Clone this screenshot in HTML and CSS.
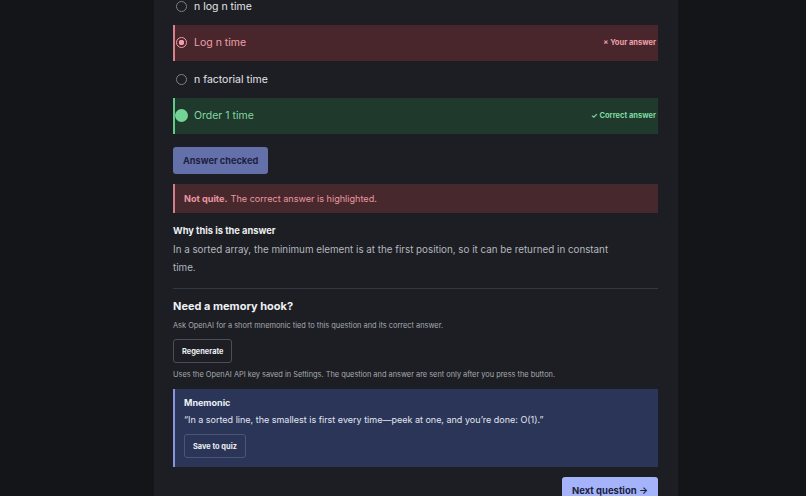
FILE: index.html
```html
<!DOCTYPE html>
<html lang="en">
<head>
<meta charset="utf-8">
<title>Quiz</title>
<link rel="stylesheet" href="styles.css">
</head>
<body>
<main class="page">
  <section class="card">
    <ul class="options">
      <li class="option">
        <span class="radio"></span>
        <span class="label">n log n time</span>
      </li>
      <li class="option option-wrong">
        <span class="radio radio-selected"></span>
        <span class="label">Log n time</span>
        <span class="tag">× Your answer</span>
      </li>
      <li class="option">
        <span class="radio"></span>
        <span class="label">n factorial time</span>
      </li>
      <li class="option option-correct">
        <span class="radio radio-correct"></span>
        <span class="label">Order 1 time</span>
        <span class="tag">✓ Correct answer</span>
      </li>
    </ul>

    <button class="btn-checked" type="button">Answer checked</button>

    <div class="feedback"><strong>Not quite.</strong> The correct answer is highlighted.</div>

    <div class="why">
      <h3 class="why-title">Why this is the answer</h3>
      <p class="why-text">In a sorted array, the minimum element is at the first position, so it can be returned in constant time.</p>
    </div>

    <hr class="divider">

    <div class="hook">
      <h2 class="hook-title">Need a memory hook?</h2>
      <p class="hint">Ask OpenAI for a short mnemonic tied to this question and its correct answer.</p>
      <button class="btn-outline" type="button">Regenerate</button>
      <p class="hint">Uses the OpenAI API key saved in Settings. The question and answer are sent only after you press the button.</p>
      <div class="mnemonic">
        <h4 class="mnemonic-title">Mnemonic</h4>
        <p class="mnemonic-text">“In a sorted line, the smallest is first every time—peek at one, and you’re done: O(1).”</p>
        <button class="btn-outline btn-save" type="button">Save to quiz</button>
      </div>
    </div>

    <div class="actions">
      <button class="btn-next" type="button">Next question →</button>
    </div>
  </section>
</main>
</body>
</html>
```

FILE: styles.css
```css
* { box-sizing: border-box; }

html, body {
  margin: 0;
  height: 100%;
}

body {
  background: #141518;
  font-family: Inter, "Noto Sans", "Liberation Sans", sans-serif;
  color: #e6e7ea;
  overflow: hidden;
}

.page {
  display: flex;
  justify-content: center;
  padding-left: 26px;
  min-height: 100%;
}

.card {
  width: 524px;
  background: #1c1e23;
  padding: 0 20px 0 19px;
  margin-top: -12px;
  display: flex;
  flex-direction: column;
}

.options {
  list-style: none;
  margin: 0;
  padding: 0;
  display: flex;
  flex-direction: column;
}

.option {
  height: 36.5px;
  display: flex;
  align-items: center;
  gap: 7px;
  padding: 0 2px 0 1px;
  border-left: 2px solid transparent;
  font-size: 10.5px;
  color: #e4e5e8;
}

.option-wrong {
  background: #48262c;
  border-left-color: #d9808d;
  color: #f0a0aa;
}

.option-correct {
  background: #1f392c;
  border-left-color: #63c98a;
  color: #7fd8a0;
}

.radio {
  width: 11px;
  height: 11px;
  border-radius: 50%;
  border: 1.5px solid #7d8087;
  flex: none;
}

.radio-selected {
  border-color: #f0a0aa;
  background: radial-gradient(circle, #f0a0aa 0 2.5px, transparent 3px);
}

.radio-correct {
  width: 13px;
  height: 13px;
  margin-left: -1px;
  margin-right: -1px;
  border: none;
  background: #72d596;
}

.label { flex: 1; }

.tag {
  font-size: 7.5px;
  font-weight: 700;
}

.btn-checked {
  align-self: flex-start;
  margin-top: 13px;
  height: 27px;
  padding: 0 10px;
  border: none;
  border-radius: 3px;
  background: #6470aa;
  color: #1d2140;
  font-family: inherit;
  font-size: 9.2px;
  font-weight: 700;
}

.feedback {
  margin-top: 10px;
  height: 29px;
  display: flex;
  align-items: center;
  gap: 3px;
  padding-left: 9px;
  background: #47282d;
  border-left: 2px solid #d27f8b;
  color: #ea98a2;
  font-size: 9.1px;
}

.feedback strong { font-weight: 700; }

.why { margin-top: 11px; }

.why-title {
  margin: 0;
  font-size: 9.3px;
  font-weight: 700;
  line-height: 14px;
  color: #eceef1;
}

.why-text {
  margin: 3px 0 0;
  max-width: 440px;
  font-size: 9.8px;
  line-height: 17.5px;
  color: #b4b7be;
}

.divider {
  margin: 12px 0 0;
  border: none;
  border-top: 1px solid #34373d;
}

.hook {
  display: flex;
  flex-direction: column;
  align-items: flex-start;
}

.hook-title {
  margin: 9px 0 0;
  font-size: 11px;
  font-weight: 700;
  line-height: 16px;
  color: #eef0f3;
}

.hint {
  margin: 6px 0 0;
  font-size: 7.4px;
  line-height: 12px;
  color: #a7aab1;
}

.btn-outline {
  margin-top: 7px;
  height: 24px;
  padding: 0 8px;
  border: 1px solid #4b4e56;
  border-radius: 3px;
  background: transparent;
  color: #eceef1;
  font-family: inherit;
  font-size: 7.4px;
  font-weight: 700;
}

.mnemonic {
  align-self: stretch;
  margin-top: 8px;
  height: 78px;
  padding: 7px 0 0 9px;
  background: #2a3558;
  border-left: 2px solid #8994df;
}

.mnemonic-title {
  margin: 0;
  font-size: 9px;
  font-weight: 700;
  line-height: 14px;
  color: #eef0f5;
}

.mnemonic-text {
  margin: 3px 0 0;
  font-size: 9px;
  line-height: 14px;
  color: #e3e6f0;
}

.btn-save {
  margin-top: 7px;
  border-color: #4b5578;
}

.actions {
  display: flex;
  justify-content: flex-end;
  margin-top: 10px;
}

.btn-next {
  height: 26px;
  padding: 0 10px;
  border: none;
  border-radius: 3px;
  background: #a5b3fb;
  color: #1a1f3a;
  font-family: inherit;
  font-size: 9.5px;
  font-weight: 700;
}
```
